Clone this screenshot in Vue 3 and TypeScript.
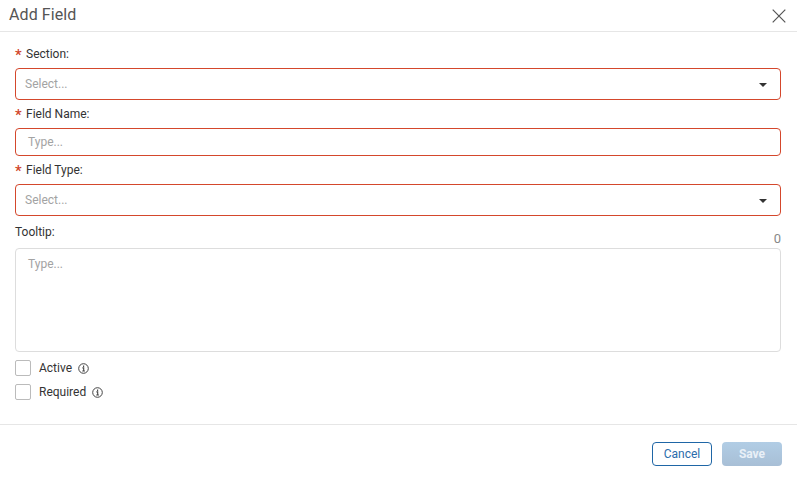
<script setup lang="ts">
interface Opt { label: string }
const checks: Opt[] = [{ label: 'Active' }, { label: 'Required' }]
</script>

<template>
  <div class="dialog">
    <header class="head">
      <h1 class="title">Add Field</h1>
      <svg class="close" width="14" height="14" viewBox="0 0 14 14" aria-label="Close">
        <path d="M0.7 0.7 13.3 13.3M13.3 0.7 0.7 13.3" fill="none" stroke="#555" stroke-width="1.2" />
      </svg>
    </header>

    <div class="body">
      <label class="label first"><span class="star">*</span>Section:</label>
      <div class="select invalid">
        <span class="ph">Select...</span>
        <span class="caret"></span>
      </div>

      <label class="label"><span class="star">*</span>Field Name:</label>
      <div class="input invalid"><span class="ph">Type...</span></div>

      <label class="label"><span class="star">*</span>Field Type:</label>
      <div class="select invalid">
        <span class="ph">Select...</span>
        <span class="caret"></span>
      </div>

      <div class="tip-row">
        <label class="tip-label">Tooltip:</label>
        <span class="count">0</span>
      </div>
      <div class="textarea"><span class="ph">Type...</span></div>

      <div class="checks">
        <div v-for="c in checks" :key="c.label" class="check">
          <span class="box"></span>
          <span class="check-text">{{ c.label }}</span>
          <svg class="info" width="11" height="11" viewBox="0 0 11 11">
            <circle cx="5.5" cy="5.5" r="4.8" fill="none" stroke="#444" stroke-width="1" />
            <path d="M4.4 4.9H5.7V8M4.3 8H6.9M5.6 2.6V3.9" fill="none" stroke="#444" stroke-width="1.1" />
          </svg>
        </div>
      </div>
    </div>

    <footer class="foot">
      <button class="btn cancel" type="button">Cancel</button>
      <button class="btn save" type="button">Save</button>
    </footer>
  </div>
</template>

<style scoped>
.dialog {
  width: 797px;
  height: 481px;
  background: #fff;
  font-family: Roboto, "Liberation Sans", sans-serif;
  font-size: 12px;
  color: #333;
  display: flex;
  flex-direction: column;
  box-sizing: border-box;
}
.head {
  height: 32px;
  box-sizing: border-box;
  border-bottom: 1px solid #e6e6e6;
  display: flex;
  align-items: center;
  justify-content: space-between;
  padding: 0 11px 2px 9px;
}
.title {
  margin: 0;
  font-size: 16px;
  font-weight: 400;
  line-height: 28px;
  color: #555;
  letter-spacing: 0.1px;
}
.close {
  margin-top: 3px;
}
.body {
  padding: 0 16px 0 15px;
  display: flex;
  flex-direction: column;
  height: 392px;
  box-sizing: border-box;
}
.label {
  height: 28px;
  line-height: 28px;
  display: flex;
  align-items: center;
  color: #333;
}
.label.first {
  margin-top: 8px;
}
.star {
  color: #d0452b;
  font-size: 15px;
  font-weight: 500;
  width: 11px;
  display: inline-block;
  position: relative;
  top: 1px;
}
.select,
.input,
.textarea {
  box-sizing: border-box;
  border-radius: 4px;
  background: #fff;
  border: 1px solid #ddd;
}
.invalid {
  border-color: #d4472c;
}
.select {
  height: 32px;
  display: flex;
  align-items: center;
  justify-content: space-between;
  padding: 0 13px 0 9px;
}
.input {
  height: 28px;
  display: flex;
  align-items: center;
  padding: 0 12px;
}
.ph {
  color: #a3a3a3;
}
.caret {
  width: 0;
  height: 0;
  border-left: 4.5px solid transparent;
  border-right: 4.5px solid transparent;
  border-top: 4.5px solid #333;
  margin-top: 2px;
}
.tip-row {
  height: 32px;
  display: flex;
  justify-content: space-between;
}
.tip-label {
  line-height: 32px;
}
.count {
  color: #888;
  font-size: 13px;
  line-height: 14px;
  margin-top: 16px;
}
.textarea {
  height: 104px;
  padding: 8px 12px;
}
.checks {
  display: flex;
  flex-direction: column;
  gap: 8px;
  margin-top: 8px;
}
.check {
  display: flex;
  align-items: center;
  height: 16px;
}
.box {
  box-sizing: border-box;
  width: 16px;
  height: 16px;
  border: 1px solid #bbb;
  border-radius: 2px;
  margin-right: 8px;
}
.check-text {
  margin-right: 6px;
}
.foot {
  border-top: 1px solid #e6e6e6;
  flex: 1;
  display: flex;
  justify-content: flex-end;
  gap: 10px;
  padding: 17px 15px 0 0;
}
.btn {
  box-sizing: border-box;
  width: 60px;
  height: 24px;
  border-radius: 4px;
  font-family: inherit;
  font-size: 12px;
  padding: 0;
  cursor: pointer;
}
.cancel {
  background: #fff;
  border: 1px solid #1f66a6;
  color: #2a6cab;
}
.save {
  background: linear-gradient(#b1cde5, #a8bfd6);
  border: 0;
  color: #e9f0f7;
  font-weight: 700;
}
</style>
